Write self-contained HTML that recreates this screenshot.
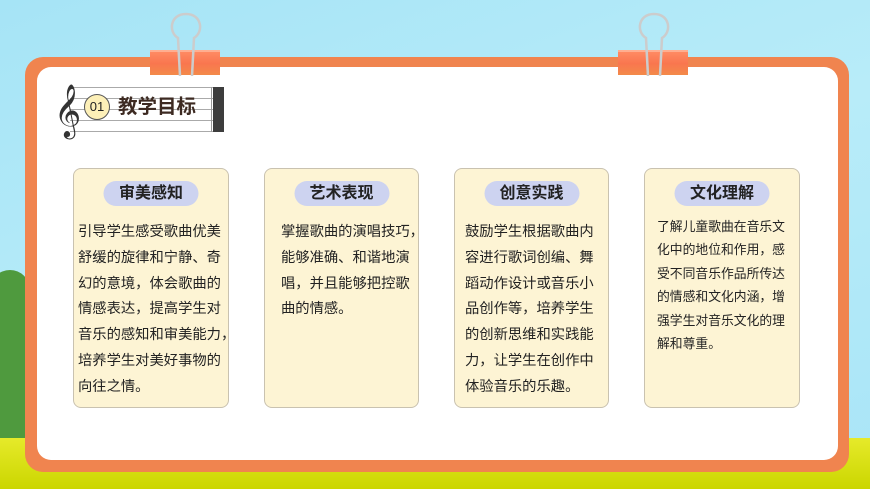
<!DOCTYPE html>
<html><head><meta charset="utf-8"><style>
*{margin:0;padding:0;box-sizing:border-box}
body{width:870px;height:489px;overflow:hidden;position:relative;font-family:"Liberation Sans","Noto Sans CJK SC",sans-serif;background:linear-gradient(160deg,#a6e4f6 0%,#b8ecf9 50%,#a9e5f7 100%)}
.grass{position:absolute;left:0;top:438px;width:870px;height:51px;background:linear-gradient(#e6ea2a,#cbd600)}
.tree{position:absolute;left:-10px;top:270px;width:40px;height:175px;background:#4f9a3e;border-radius:20px 20px 0 0}
.frame{position:absolute;left:25px;top:57px;width:824px;height:415px;background:#f0844f;border-radius:18px}
.inner{position:absolute;left:37px;top:67px;width:801px;height:393px;background:#fff;border-radius:14px}
.clip{position:absolute;top:50px;width:70px;height:25px;background:linear-gradient(#ff8a63,#f9764f 50%,#f38a4a);border-top:2px solid #ffae90}
.wire{position:absolute;top:10px;width:40px;height:66px}
.staff{position:absolute;left:70px;top:87px;width:150px;height:44px}
.staff i{position:absolute;left:0;width:150px;height:1px;background:#aaa}
.card{position:absolute;top:168px;height:240px;background:#fdf4d4;border:1px solid #c9c2b0;border-radius:8px}
.pill{position:absolute;top:12px;left:50%;transform:translateX(-50%);width:95px;height:25px;background:#cdd3f0;border-radius:13px;text-align:center;font-weight:bold;font-size:16px;line-height:25px;color:#222}
.txt{position:absolute;top:51px;font-size:14.3px;line-height:25.8px;color:#222;white-space:nowrap}
</style></head><body>
<div class="tree"></div>
<div class="grass"></div>
<div class="frame"></div>
<div class="inner"></div>
<div class="clip" style="left:150px"></div>
<div class="clip" style="left:618px"></div>
<svg class="wire" style="left:166px" viewBox="0 0 40 66"><path d="M14 66 L12 28 C2 22 4 4 20 4 C36 4 38 22 28 28 L26 66" fill="none" stroke="#ccc" stroke-width="2.5"/></svg>
<svg class="wire" style="left:634px" viewBox="0 0 40 66"><path d="M14 66 L12 28 C2 22 4 4 20 4 C36 4 38 22 28 28 L26 66" fill="none" stroke="#ccc" stroke-width="2.5"/></svg>
<div class="staff"><i style="top:0"></i><i style="top:11px"></i><i style="top:22px"></i><i style="top:33px"></i><i style="top:44px"></i></div>
<div style="position:absolute;left:211px;top:87px;width:1px;height:45px;background:#999"></div>
<div style="position:absolute;left:213px;top:87px;width:11px;height:45px;background:#3d3d3d"></div>
<div style="position:absolute;left:54px;top:80px;font-size:46px;line-height:60px;color:#333;font-family:'DejaVu Sans',serif">𝄞</div>
<div style="position:absolute;left:84px;top:94px;width:26px;height:26px;border-radius:50%;background:#fdf0b8;border:1px solid #555;font-size:13px;line-height:24px;text-align:center;color:#222">01</div>
<div style="position:absolute;left:118px;top:94px;font-size:19.5px;font-weight:bold;color:#3d2a22;line-height:26px">教学目标</div>

<div class="card" style="left:73px;width:156px"><div class="pill">审美感知</div><div class="txt" style="left:4px">引导学生感受歌曲优美<br>舒缓的旋律和宁静、奇<br>幻的意境，体会歌曲的<br>情感表达，提高学生对<br>音乐的感知和审美能力，<br>培养学生对美好事物的<br>向往之情。</div></div>
<div class="card" style="left:264px;width:155px"><div class="pill">艺术表现</div><div class="txt" style="left:16px">掌握歌曲的演唱技巧，<br>能够准确、和谐地演<br>唱，并且能够把控歌<br>曲的情感。</div></div>
<div class="card" style="left:454px;width:155px"><div class="pill">创意实践</div><div class="txt" style="left:10px">鼓励学生根据歌曲内<br>容进行歌词创编、舞<br>蹈动作设计或音乐小<br>品创作等，培养学生<br>的创新思维和实践能<br>力，让学生在创作中<br>体验音乐的乐趣。</div></div>
<div class="card" style="left:644px;width:156px"><div class="pill">文化理解</div><div class="txt" style="left:12px;top:46px;font-size:12.8px;line-height:23.4px">了解儿童歌曲在音乐文<br>化中的地位和作用，感<br>受不同音乐作品所传达<br>的情感和文化内涵，增<br>强学生对音乐文化的理<br>解和尊重。</div></div>
</body></html>
